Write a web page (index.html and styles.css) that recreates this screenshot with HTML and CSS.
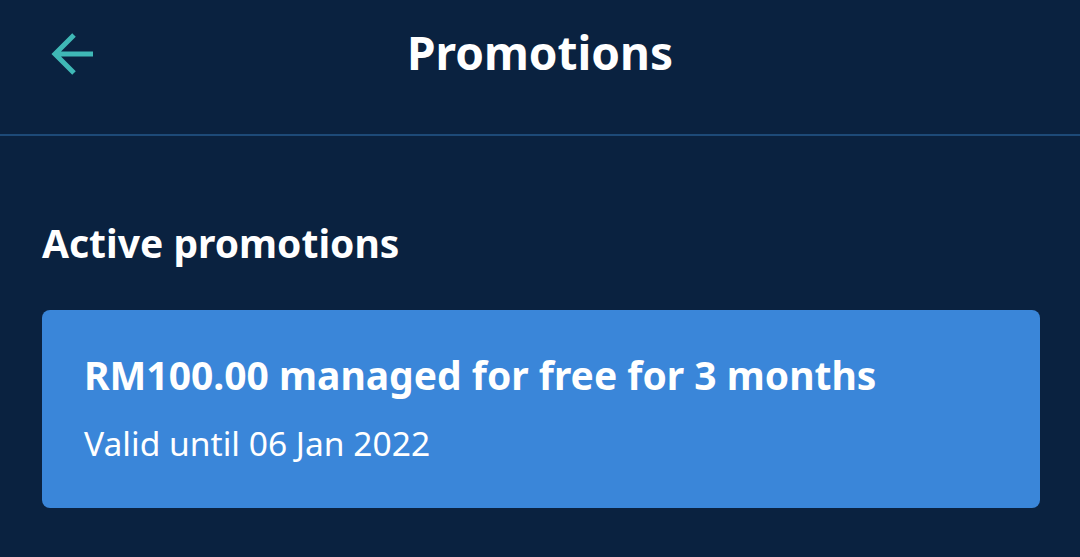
FILE: index.html
```html
<!DOCTYPE html>
<html>
    <head>
        <title>Promotions</title>
        <meta name="viewport" content="width=device-width, initial-scale=1.0">
        <link rel="stylesheet" href="styles.css">
    </head>
    <body>
        <div class="header">
            <button type="button" class="back" aria-label="Back">
                <svg width="48" height="48" viewBox="0 0 48 48">
                    <path d="M46 24H10M27 5L8 24l19 19" fill="none" stroke="#3fb8b6" stroke-width="5"/>
                </svg>
            </button>
            <h1>Promotions</h1>
        </div>
        <div class="content">
            <h2>Active promotions</h2>
            <div class="card">
                <p class="card-title">RM100.00 managed for free for 3 months</p>
                <p class="card-sub">Valid until 06 Jan 2022</p>
            </div>
        </div>
    </body>
</html>
```

FILE: styles.css
```css
body {
    margin: 0;
    background-color: #0a2240;
    color: #fff;
    font-family: "Noto Sans", "Open Sans", sans-serif;
}
h1, h2, p {
    margin: 0;
}
.header {
    position: relative;
    height: 134px;
    display: flex;
    align-items: center;
    justify-content: center;
    border-bottom: 2px solid #1d4a78;
}
.header h1 {
    font-size: 46px;
    font-weight: 700;
    margin-top: -30px;
}
.back {
    position: absolute;
    left: 47px;
    top: 30px;
    padding: 0;
    border: none;
    background: none;
    line-height: 0;
}
.content {
    padding: 0 40px 0 42px;
}
.content h2 {
    font-size: 39px;
    font-weight: 700;
    margin: 80px 0 41px;
}
.card {
    background-color: #3a86d9;
    border-radius: 8px;
    padding: 39px 42px 42px;
}
.card-title {
    font-size: 39px;
    font-weight: 700;
    line-height: 52px;
}
.card-sub {
    font-size: 33.6px;
    line-height: 45px;
    margin-top: 20px;
}
```
